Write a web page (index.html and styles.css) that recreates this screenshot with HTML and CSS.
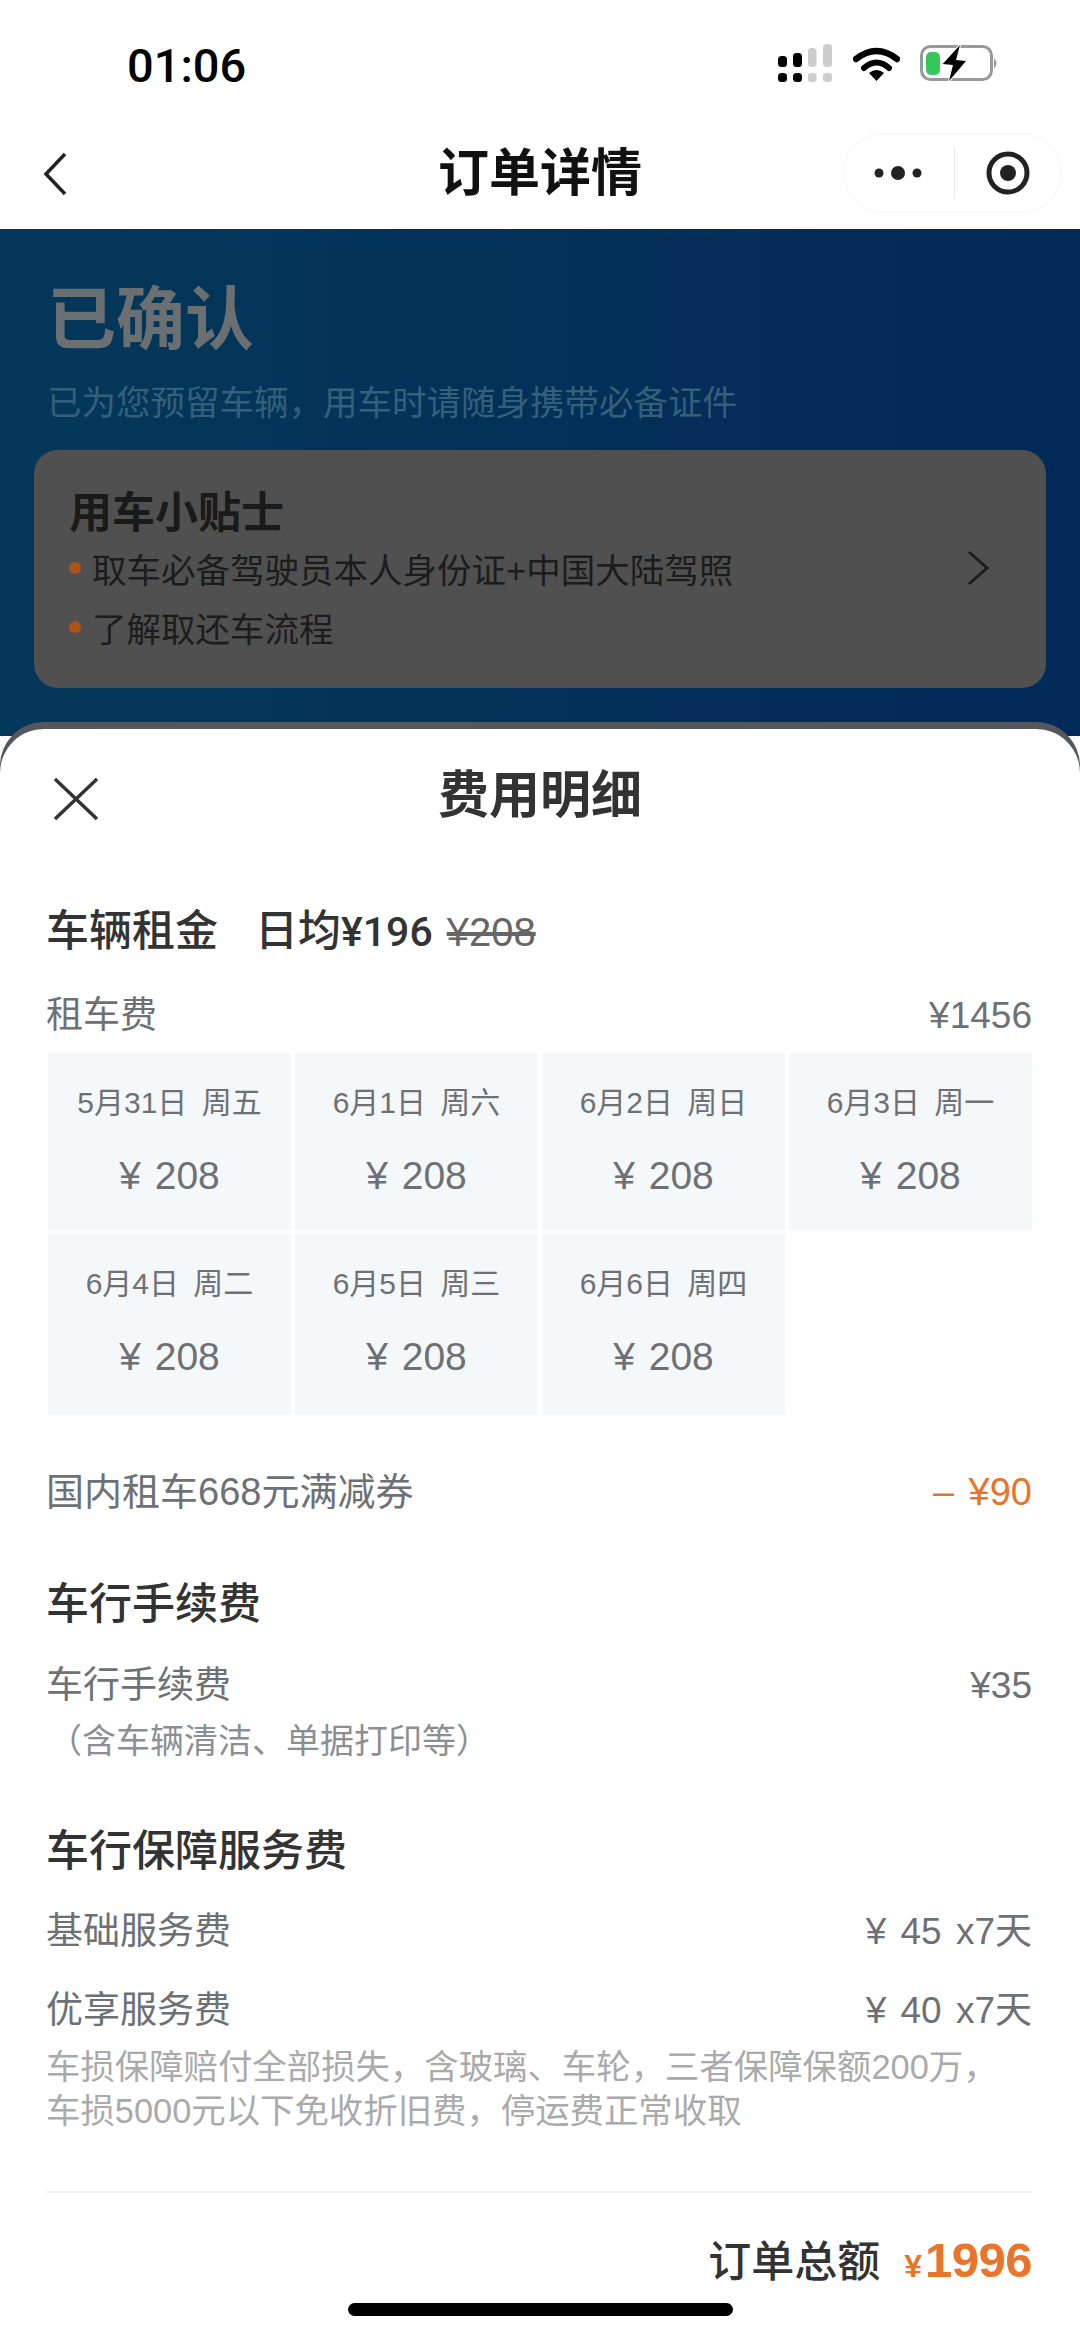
FILE: index.html
```html
<!DOCTYPE html>
<html lang="zh-CN">
<head>
  <meta charset="UTF-8">
  <title>订单详情</title>
  <link rel="stylesheet" href="styles.css">
</head>
<body>
  <div class="status">
    <span class="time">01:06</span>
    <div class="status-icons">
      <svg width="55" height="38" viewBox="0 0 55 38">
        <rect x="0" y="12" width="9" height="11" rx="3.5" fill="#000"/>
        <rect x="0" y="29" width="9" height="9" rx="3.5" fill="#000"/>
        <rect x="15" y="9" width="9" height="14" rx="3.5" fill="#000"/>
        <rect x="15" y="29" width="9" height="9" rx="3.5" fill="#000"/>
        <rect x="30" y="4" width="8.5" height="19" rx="3.5" fill="#cdcdcd"/>
        <rect x="30" y="29" width="8.5" height="9" rx="3" fill="#cdcdcd"/>
        <rect x="45" y="0" width="9" height="23" rx="3.5" fill="#cdcdcd"/>
        <rect x="45" y="29" width="9" height="9" rx="3" fill="#cdcdcd"/>
      </svg>
      <svg width="47" height="35" viewBox="0 0 47 35">
        <path d="M3 13 Q23.5 -3 44 13" fill="none" stroke="#000" stroke-width="6.5" stroke-linecap="round"/>
        <path d="M11 22 Q23.5 11 36 22" fill="none" stroke="#000" stroke-width="6" stroke-linecap="round"/>
        <path d="M16 27 Q23.5 21 31 27 L23.5 35 Z" fill="#000"/>
      </svg>
      <svg width="80" height="40" viewBox="0 0 80 40">
        <rect x="1.5" y="3.5" width="70" height="33" rx="9" fill="#fff" stroke="#999" stroke-width="3"/>
        <rect x="6" y="9" width="14" height="23" rx="5" fill="#35c759"/>
        <path d="M74 15 Q79 20 74 26 Z" fill="#999"/>
        <path d="M40 2 L22.7 21 L33 22 L29 38 L46 18 L36 17 Z" fill="#000" stroke="#fff" stroke-width="2" paint-order="stroke"/>
      </svg>
    </div>
  </div>

  <div class="nav">
    <svg class="back" width="24" height="44" viewBox="0 0 24 44">
      <path d="M22 2 L3 22 L22 42" fill="none" stroke="#222" stroke-width="3.5"/>
    </svg>
    <h1 class="nav-title">订单详情</h1>
    <div class="capsule">
      <svg width="48" height="16" viewBox="0 0 48 16">
        <circle cx="5" cy="8" r="4.5" fill="#222"/>
        <circle cx="24" cy="8" r="7" fill="#222"/>
        <circle cx="43" cy="8" r="4.5" fill="#222"/>
      </svg>
      <span class="capsule-line"></span>
      <svg width="44" height="44" viewBox="0 0 44 44">
        <circle cx="22" cy="22" r="19" fill="none" stroke="#222" stroke-width="5"/>
        <circle cx="22" cy="22" r="8" fill="#222"/>
      </svg>
    </div>
  </div>

  <div class="backdrop">
    <div class="state">已确认</div>
    <div class="state-sub">已为您预留车辆&#xFF0C;用车时请随身携带必备证件</div>
    <div class="tips">
      <div class="tips-title">用车小贴士</div>
      <div class="tip tip-first">
        <span class="dot"></span>
        <span class="tip-text">取车必备驾驶员本人身份证+中国大陆驾照</span>
        <svg width="22" height="36" viewBox="0 0 22 36">
          <path d="M2 2 L20 18 L2 34" fill="none" stroke="#1c1c1c" stroke-width="3"/>
        </svg>
      </div>
      <div class="tip tip-second">
        <span class="dot"></span>
        <span class="tip-text">了解取还车流程</span>
      </div>
    </div>
  </div>

  <div class="sheet">
    <div class="sheet-head">
      <svg class="close" width="46" height="44" viewBox="0 0 46 44">
        <path d="M2 2 L44 42 M44 2 L2 42" fill="none" stroke="#333" stroke-width="3.5"/>
      </svg>
      <h2 class="sheet-title">费用明细</h2>
    </div>

    <div class="sheet-body">
      <div class="heading heading-rent">
        <span>车辆租金</span>
        <span class="avg">日均<span class="avg-num">¥196</span></span>
        <s class="old-price">¥208</s>
      </div>
      <div class="row row-fee"><span>租车费</span><span>¥1456</span></div>

      <div class="days">
        <div class="day"><span class="day-date">5月31日 周五</span><span class="day-price">¥ 208</span></div>
        <div class="day"><span class="day-date">6月1日 周六</span><span class="day-price">¥ 208</span></div>
        <div class="day"><span class="day-date">6月2日 周日</span><span class="day-price">¥ 208</span></div>
        <div class="day"><span class="day-date">6月3日 周一</span><span class="day-price">¥ 208</span></div>
        <div class="day"><span class="day-date">6月4日 周二</span><span class="day-price">¥ 208</span></div>
        <div class="day"><span class="day-date">6月5日 周三</span><span class="day-price">¥ 208</span></div>
        <div class="day"><span class="day-date">6月6日 周四</span><span class="day-price">¥ 208</span></div>
      </div>

      <div class="row row-coupon"><span>国内租车668元满减券</span><span class="minus">– ¥90</span></div>

      <div class="heading heading-fee">车行手续费</div>
      <div class="row row-first"><span>车行手续费</span><span>¥35</span></div>
      <div class="note">&#xFF08;含车辆清洁、单据打印等&#xFF09;</div>

      <div class="heading heading-service">车行保障服务费</div>
      <div class="row row-base"><span>基础服务费</span><span>¥ 45 x7天</span></div>
      <div class="row row-plus"><span>优享服务费</span><span>¥ 40 x7天</span></div>
      <p class="desc">车损保障赔付全部损失&#xFF0C;含玻璃、车轮&#xFF0C;三者保障保额200万&#xFF0C;<br>车损5000元以下免收折旧费&#xFF0C;停运费正常收取</p>

      <div class="total">
        <span class="total-label">订单总额</span>
        <span class="total-yen">¥</span><span class="total-num">1996</span>
      </div>
    </div>
  </div>

  <div class="home-bar"></div>
</body>
</html>
```

FILE: styles.css
```css
* { box-sizing: border-box; }
html, body { margin: 0; padding: 0; }
body {
  position: relative;
  width: 1080px;
  height: 2336px;
  overflow: hidden;
  background: #fff;
  font-family: "Liberation Sans", "Noto Sans CJK SC", sans-serif;
  color: #333;
}

/* status bar */
.status { height: 118px; padding: 12px 0 0 127px; display: flex; align-items: center; justify-content: space-between; }
.time { font-family: Roboto, sans-serif; font-size: 47px; font-weight: 500; color: #000; }
.status-icons { display: flex; align-items: center; gap: 20px; padding-right: 80px; margin-bottom: 4px; }

/* nav */
.nav { height: 111px; position: relative; display: flex; align-items: center; justify-content: center; }
.back { position: absolute; left: 43px; top: 34px; }
.nav-title { margin: 0; font-size: 51px; font-weight: 700; color: #111; line-height: 60px; }
.capsule {
  position: absolute;
  right: 18px;
  top: 15px;
  width: 219px;
  height: 80px;
  display: flex;
  align-items: center;
  justify-content: space-between;
  padding: 0 31px 0 30px;
  border: 1px solid #f6f6f6;
  border-radius: 40px;
}
.capsule-line { width: 1px; height: 52px; background: #e8e8e8; }

/* dimmed order page behind the sheet */
.backdrop {
  height: 507px;
  padding: 52px 34px 0;
  background: linear-gradient(90deg, #04385a, #022f58 60%, #012a58);
}
.state { padding-left: 13px; font-size: 69px; font-weight: 700; line-height: 80px; color: #6a6f72; }
.state-sub { margin-top: 20px; padding-left: 13px; font-size: 34.5px; line-height: 44px; color: #34607a; }
.tips { margin-top: 25px; height: 238px; padding: 38px 57px 0 35px; background: #505050; border-radius: 24px; }
.tips-title { font-size: 43px; font-weight: 700; line-height: 50px; color: #1a1a1a; }
.tip { display: flex; align-items: center; height: 44px; font-size: 34.5px; color: #1c1c1c; }
.tip-first { margin-top: 8px; }
.tip-second { margin-top: 15px; }
.tip-text { flex: 1; }
.dot { width: 12px; height: 12px; margin-right: 11px; border-radius: 50%; background: #b0521c; }

/* bottom sheet */
.sheet {
  position: absolute;
  left: 0;
  right: 0;
  top: 729px;
  bottom: 0;
  background: #fff;
  border-radius: 44px 44px 0 0;
  box-shadow: 0 -7px 0 #54575c;
}
.sheet-head { position: relative; height: 130px; display: flex; align-items: center; justify-content: center; }
.sheet-title { margin: 3px 0 0; font-size: 51px; font-weight: 700; line-height: 60px; color: #333; }
.close { position: absolute; left: 53px; top: 48px; }
.sheet-body { padding: 0 48px; }

.heading { margin-left: -2px; font-size: 43px; font-weight: 500; line-height: 50px; color: #333; }
.heading-rent { margin-top: 47px; display: flex; align-items: baseline; }
.avg { margin-left: 37px; }
.avg-num { font-family: Roboto, sans-serif; font-size: 41px; }
.old-price { margin-left: 14px; font-size: 40px; font-weight: 400; color: #666; }
.heading-fee { margin-top: 62px; }
.heading-service { margin-top: 63px; }

.row { display: flex; justify-content: space-between; font-size: 37px; line-height: 50px; word-spacing: 4px; color: #6d7175; }
.row span:first-child { margin-left: -2px; }
.row-fee { margin-top: 34px; }
.row-coupon { margin-top: 52px; font-size: 38px; }
.row-first { margin-top: 32px; }
.row-base { margin-top: 31px; }
.row-plus { margin-top: 29px; }
.minus { color: #e8732a; }

.days { margin-top: 12px; display: grid; grid-template-columns: repeat(4, 1fr); grid-template-rows: 177px 181px; gap: 4px; }
.day { display: flex; flex-direction: column; align-items: center; background: #f4f8fb; color: #6d7175; }
.day-date { margin-top: 30px; font-size: 30px; line-height: 40px; word-spacing: 6px; }
.day-price { margin-top: 30px; font-size: 39px; line-height: 46px; word-spacing: 3px; }

.note { margin-top: 8px; font-size: 34px; line-height: 44px; color: #8b8f93; }
.desc { margin: 9px 0 0 -2px; padding-bottom: 58px; border-bottom: 2px solid #eeeeee; font-size: 34.4px; line-height: 44px; color: #aaaaaa; }

.total { margin-top: 37px; display: flex; align-items: baseline; justify-content: flex-end; line-height: 60px; }
.total-label { font-size: 43px; font-weight: 500; color: #333; margin-right: 24px; }
.total-yen { font-size: 32px; font-weight: 700; color: #e8752a; margin-right: 3px; }
.total-num { font-size: 49px; font-weight: 700; letter-spacing: -0.5px; color: #e8752a; }

.home-bar { position: absolute; left: 348px; top: 2303px; width: 385px; height: 13px; background: #000; border-radius: 7px; }
```
